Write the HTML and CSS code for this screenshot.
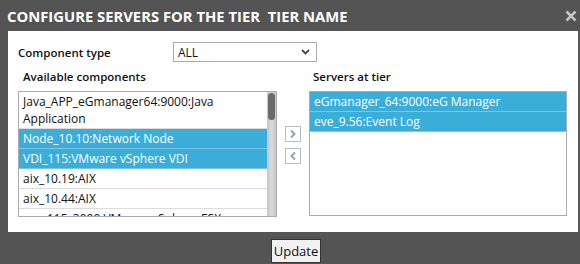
FILE: index.html
```html
<!DOCTYPE html>
<html lang="en">

<head>
    <meta charset="UTF-8">
    <meta name="viewport" content="width=device-width, initial-scale=1.0">
    <title>Configure servers</title>
    <link rel="stylesheet" href="styles.css">
</head>

<body>
    <div class="dialog">
        <div class="titlebar">
            <span class="title">CONFIGURE SERVERS FOR THE TIER &nbsp;TIER NAME</span>
            <svg class="close" width="12" height="12" viewBox="0 0 12 12"><path d="M1.5 1.5 L10.5 10.5 M10.5 1.5 L1.5 10.5" stroke="#c4c4c4" stroke-width="2.6"/></svg>
        </div>
        <div class="panel">
            <div class="typerow">
                <span class="typelabel">Component type</span>
                <div class="select">
                    <span>ALL</span>
                    <svg width="9" height="6" viewBox="0 0 9 6"><path d="M1 1 L4.5 4.5 L8 1" fill="none" stroke="#444" stroke-width="1.8"/></svg>
                </div>
            </div>
            <div class="lists">
                <div class="listlabel avail">Available components</div>
                <div></div>
                <div class="listlabel">Servers at tier</div>

                <div class="listbox left">
                    <div class="items">
                        <div class="item">Java_APP_eGmanager64:9000:Java Application</div>
                        <div class="item sel">Node_10.10:Network Node</div>
                        <div class="item sel">VDI_115:VMware vSphere VDI</div>
                        <div class="item">aix_10.19:AIX</div>
                        <div class="item">aix_10.44:AIX</div>
                        <div class="item">esx_115_3000:VMware vSphere ESX</div>
                    </div>
                    <div class="scrollbar"><div class="thumb"></div></div>
                </div>
                <div class="arrows">
                    <div class="arrow"><svg width="8" height="10" viewBox="0 0 8 10"><path d="M2 1.5 L5.5 5 L2 8.5" fill="none" stroke="#9a9ea8" stroke-width="1.8"/></svg></div>
                    <div class="arrow"><svg width="8" height="10" viewBox="0 0 8 10"><path d="M6 1.5 L2.5 5 L6 8.5" fill="none" stroke="#9a9ea8" stroke-width="1.8"/></svg></div>
                </div>
                <div class="listbox right">
                    <div class="items">
                        <div class="item sel">eGmanager_64:9000:eG Manager</div>
                        <div class="item sel">eve_9.56:Event Log</div>
                    </div>
                </div>
            </div>
        </div>
        <div class="footer">
            <button class="update">Update</button>
        </div>
    </div>
</body>

</html>
```

FILE: styles.css
```css
* {
    margin: 0;
    padding: 0;
    box-sizing: border-box;
}

body {
    background-color: #545454;
    font-family: "Open Sans", "DejaVu Sans", sans-serif;
    font-size: 12px;
    color: #111;
}

.titlebar {
    height: 31px;
    display: flex;
    align-items: center;
    justify-content: space-between;
    padding: 0 3px 0 7px;
}

.title {
    color: #fff;
    font-weight: bold;
    font-size: 14.8px;
}

.panel {
    background-color: #fff;
    margin: 0 2px 0 8px;
    height: 201px;
    padding: 11px 0 0 10px;
}

.typerow {
    display: flex;
    align-items: center;
    height: 20px;
}

.typelabel {
    width: 155px;
    font-size: 11.5px;
    font-weight: 600;
}

.select {
    width: 144px;
    height: 20px;
    border: 1px solid #a8acb8;
    display: flex;
    align-items: center;
    justify-content: space-between;
    padding: 0 6px 0 4px;
}

.lists {
    display: grid;
    grid-template-columns: 259px 16px 258px;
    column-gap: 8px;
    margin-top: 6px;
}

.listlabel {
    font-weight: 600;
    font-size: 11.5px;
    height: 23px;
    line-height: 18px;
    padding-left: 4px;
}

.listlabel.avail {
    padding-left: 5px;
}

.listbox {
    border: 1px solid #a8acb8;
    display: flex;
    overflow: hidden;
}

.listbox.left {
    height: 126px;
}

.listbox.right {
    height: 125px;
}

.items {
    flex: 1;
    min-width: 0;
}

.scrollbar {
    width: 9px;
    flex-shrink: 0;
    background: linear-gradient(to right, #c6c6c6, #dadada, #c6c6c6);
    padding: 1px 1px 0 1px;
}

.thumb {
    height: 27px;
    background-color: #6b6b6b;
    border-radius: 4px;
}

.item {
    min-height: 20px;
    line-height: 17px;
    padding: 1px 4px 1px 4px;
    border-bottom: 1px solid #dcdcdc;
}

.item.sel {
    background-color: #3badd9;
    color: #fff;
    border-bottom-color: #7cc6e4;
}

.arrows {
    display: flex;
    flex-direction: column;
    gap: 6px;
    margin-top: 35px;
}

.arrow {
    width: 16px;
    height: 16px;
    border: 1px solid #b8bcc4;
    display: flex;
    align-items: center;
    justify-content: center;
}

.footer {
    display: flex;
    padding: 7px 0 0 271px;
}

.update {
    width: 50px;
    height: 24px;
    background-color: #f2f2f2;
    border: 1px solid #333;
    font-family: "Open Sans", "DejaVu Sans", sans-serif;
    font-size: 13px;
    color: #111;
}
```
